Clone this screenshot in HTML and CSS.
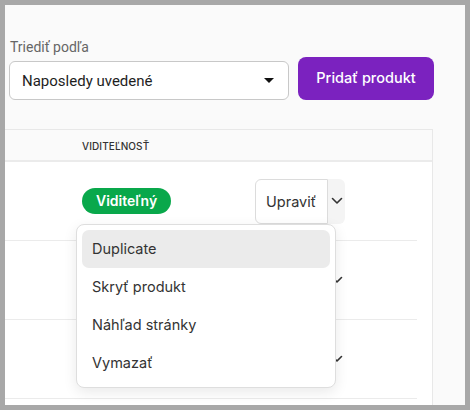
FILE: index.html
```html
<!DOCTYPE html>
<html lang="sk">
<head>
<meta charset="utf-8">
<link rel="stylesheet" href="styles.css">
</head>
<body>
<div class="page">
  <div class="toolbar">
    <div class="sort">
      <label class="sort-label">Triediť podľa</label>
      <div class="select">
        <span class="select-text">Naposledy uvedené</span>
        <span class="caret"></span>
      </div>
    </div>
    <button class="add-btn">Pridať produkt</button>
  </div>

  <div class="table">
    <div class="thead">
      <div class="col-name"></div>
      <div class="col-vis th">Viditeľnosť</div>
      <div class="col-act"></div>
    </div>

    <div class="row">
      <div class="col-name"></div>
      <div class="col-vis"><span class="badge">Viditeľný</span></div>
      <div class="col-act">
        <div class="split open">
          <span class="split-main">Upraviť</span>
          <span class="split-toggle">
            <svg width="12" height="8" viewBox="0 0 12 8"><path d="M1.5 1.5 L6 6 L10.5 1.5" fill="none" stroke="#333" stroke-width="1.6" stroke-linecap="round" stroke-linejoin="round"/></svg>
          </span>
          <div class="menu">
            <div class="menu-item active">Duplicate</div>
            <div class="menu-item">Skryť produkt</div>
            <div class="menu-item">Náhľad stránky</div>
            <div class="menu-item">Vymazať</div>
          </div>
        </div>
      </div>
    </div>

    <div class="row">
      <div class="col-name"></div>
      <div class="col-vis"></div>
      <div class="col-act">
        <div class="split">
          <span class="split-main">Upraviť</span>
          <span class="split-toggle">
            <svg width="12" height="8" viewBox="0 0 12 8"><path d="M1.5 1.5 L6 6 L10.5 1.5" fill="none" stroke="#333" stroke-width="1.6" stroke-linecap="round" stroke-linejoin="round"/></svg>
          </span>
        </div>
      </div>
    </div>

    <div class="row">
      <div class="col-name"></div>
      <div class="col-vis"></div>
      <div class="col-act">
        <div class="split">
          <span class="split-main">Upraviť</span>
          <span class="split-toggle">
            <svg width="12" height="8" viewBox="0 0 12 8"><path d="M1.5 1.5 L6 6 L10.5 1.5" fill="none" stroke="#333" stroke-width="1.6" stroke-linecap="round" stroke-linejoin="round"/></svg>
          </span>
        </div>
      </div>
    </div>

    <div class="row"></div>
  </div>
</div>
</body>
</html>
```

FILE: styles.css
```css
* { box-sizing: border-box; }
html, body { margin: 0; padding: 0; }
body {
  background: #a8a8a8;
  padding: 5px;
  width: 470px;
  height: 410px;
  overflow: hidden;
  font-family: "Inter", "Noto Sans", sans-serif;
  color: #333;
}
.page {
  width: 460px;
  height: 400px;
  background: #fafafa;
  overflow: hidden;
  position: relative;
}
.toolbar {
  display: flex;
  align-items: flex-end;
  gap: 9px;
  padding: 33px 0 0 4px;
}
.sort {
  display: flex;
  flex-direction: column;
  gap: 5px;
}
.sort-label {
  font-family: "Roboto", sans-serif;
  font-size: 14px;
  line-height: 18px;
  color: #666;
  padding-left: 1px;
}
.select {
  width: 280px;
  height: 39px;
  background: #fff;
  border: 1px solid #c8c8c8;
  border-radius: 6px;
  display: flex;
  align-items: center;
  justify-content: space-between;
  padding: 0 14px 0 12px;
}
.select-text {
  font-family: "Roboto", sans-serif;
  font-size: 15px;
  color: #1e1e1e;
}
.caret {
  width: 0;
  height: 0;
  border-left: 5px solid transparent;
  border-right: 5px solid transparent;
  border-top: 5px solid #111;
}
.add-btn {
  width: 136px;
  height: 43px;
  border: 0;
  border-radius: 8px;
  background: #7b22bf;
  color: #fff;
  font-family: "Inter", sans-serif;
  font-size: 14.5px;
  font-weight: 500;
  padding: 0 0 3px;
}
.table {
  margin-top: 29px;
  width: 428px;
  border-top: 1px solid #e8e8e8;
  border-right: 1px solid #e8e8e8;
  background: #fff;
  padding-right: 15px;
}
.thead, .row {
  display: flex;
  align-items: center;
}
.thead {
  height: 32px;
  background: #fafafa;
  margin-right: -15px;
  padding-right: 15px;
  box-shadow: inset 0 -2px 0 #ebebeb;
}
.row {
  height: 79px;
  border-bottom: 1px solid #ebebeb;
}
.col-name { width: 77px; flex: none; }
.col-vis { width: 173px; flex: none; }
.col-act { flex: 1; }
.th {
  font-size: 10px;
  font-weight: 500;
  text-transform: uppercase;
  color: #333;
  letter-spacing: 0.1px;
}
.badge {
  display: inline-block;
  background: #09a84b;
  color: #fff;
  font-size: 14px;
  font-weight: 600;
  line-height: 26px;
  padding: 0 14px;
  border-radius: 13px;
}
.split {
  position: relative;
  display: inline-flex;
  height: 45px;
}
.split-main {
  display: flex;
  align-items: center;
  padding: 0 10px;
  width: 73px;
  background: #fff;
  border: 1px solid #dcdcdc;
  border-radius: 6px 0 0 6px;
  font-size: 14.5px;
  color: #333;
}
.split-toggle {
  width: 17px;
  display: flex;
  align-items: center;
  justify-content: center;
  border-radius: 0 6px 6px 0;
}
.split.open .split-toggle { background: #f4f4f4; }
.menu {
  position: absolute;
  top: 45px;
  right: 9px;
  width: 260px;
  background: #fff;
  border: 1px solid #dedede;
  border-radius: 8px;
  box-shadow: 0 4px 14px rgba(0,0,0,0.09);
  padding: 5px;
  z-index: 5;
}
.menu-item {
  height: 38px;
  display: flex;
  align-items: center;
  padding-left: 10px;
  font-size: 14.5px;
  color: #333;
  border-radius: 7px;
}
.menu-item.active { background: #ebebeb; }
```
